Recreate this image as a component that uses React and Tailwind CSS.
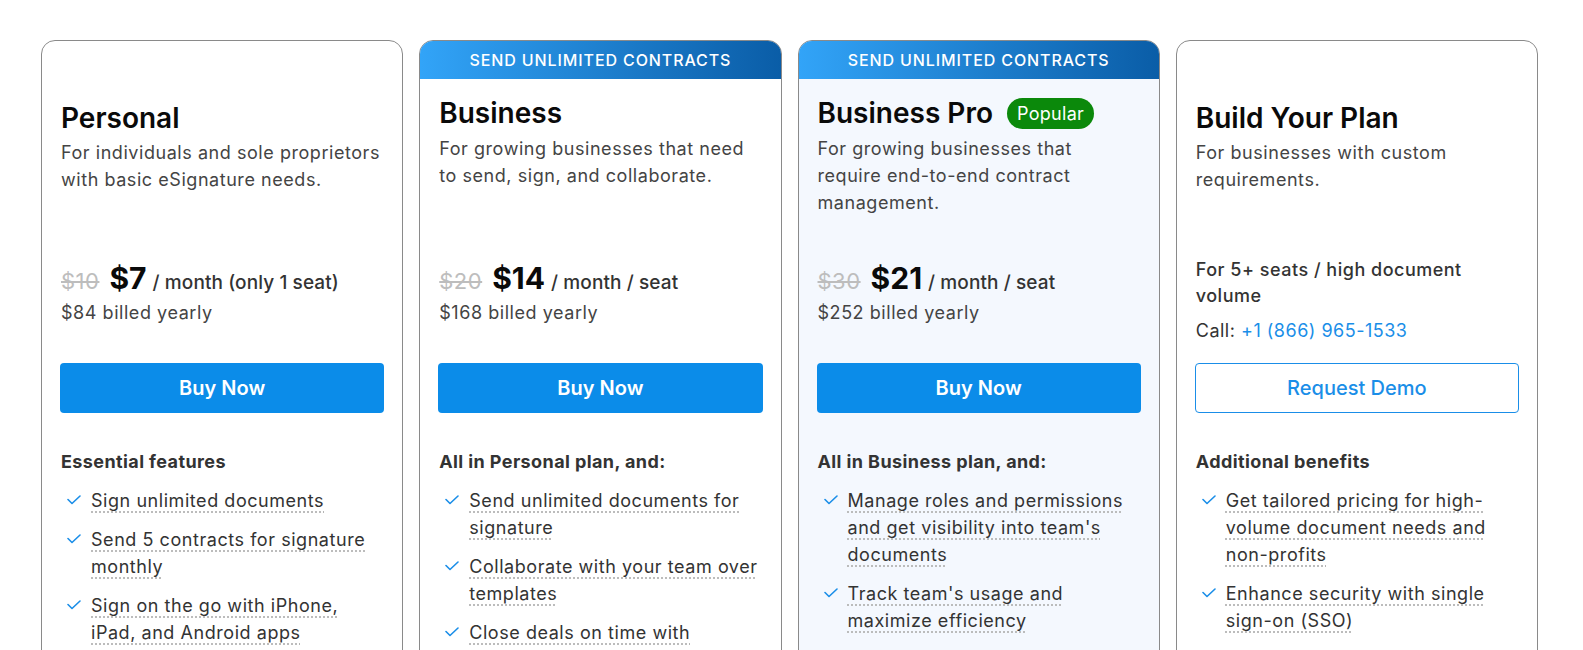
import React from 'react'

const plans = [
  {
    name: 'Personal',
    desc: 'For individuals and sole proprietors with basic eSignature needs.',
    old: '$10',
    price: '$7',
    unit: '/ month (only 1 seat)',
    billed: '$84 billed yearly',
    cta: 'Buy Now',
    heading: 'Essential features',
    features: [
      'Sign unlimited documents',
      'Send 5 contracts for signature monthly',
      'Sign on the go with iPhone, iPad, and Android apps',
      'Use reusable templates',
      'Access audit trail for every document',
    ],
  },
  {
    name: 'Business',
    banner: true,
    desc: 'For growing businesses that need to send, sign, and collaborate.',
    old: '$20',
    price: '$14',
    unit: '/ month / seat',
    billed: '$168 billed yearly',
    cta: 'Buy Now',
    heading: 'All in Personal plan, and:',
    features: [
      'Send unlimited documents for signature',
      'Collaborate with your team over templates',
      'Close deals on time with automated reminders',
      'Collect payments with documents',
    ],
  },
  {
    name: 'Business Pro',
    banner: true,
    popular: true,
    highlight: true,
    desc: 'For growing businesses that require end-to-end contract management.',
    old: '$30',
    price: '$21',
    unit: '/ month / seat',
    billed: '$252 billed yearly',
    cta: 'Buy Now',
    heading: 'All in Business plan, and:',
    features: [
      "Manage roles and permissions and get visibility into team's documents",
      "Track team's usage and maximize efficiency",
    ],
  },
  {
    name: 'Build Your Plan',
    desc: 'For businesses with custom requirements.',
    custom: true,
    cta: 'Request Demo',
    heading: 'Additional benefits',
    features: [
      'Get tailored pricing for high-volume document needs and non-profits',
      'Enhance security with single sign-on (SSO)',
    ],
  },
]

function CheckMark(){
  return (
    <svg width="14" height="10" viewBox="0 0 14 10" fill="none" className="mt-[8px] ml-[6px] shrink-0">
      <path d="M1 4.5L5 8.5L13 1" stroke="#1a8ee8" strokeWidth="1.6" strokeLinecap="round" strokeLinejoin="round" />
    </svg>
  )
}

function PlanCard({ plan }){
  return (
    <div className={`border border-[#8a8a8a] rounded-[14px] overflow-hidden flex flex-col ${plan.highlight ? 'bg-[#f4f8fe]' : 'bg-white'}`}>
      {/* header */}
      <div className="h-[219px] flex flex-col">
        {plan.banner ? (
          <div className="h-[38px] shrink-0 flex items-center justify-center bg-gradient-to-r from-[#32a4f8] to-[#0a5da7] text-white text-[16px] font-medium tracking-[0.9px] uppercase">
            Send unlimited contracts
          </div>
        ) : null}
        <div className={`px-[19px] ${plan.banner ? 'pt-[17px]' : 'pt-[60px]'}`}>
          <div className="flex items-center">
            <h3 className="text-[28px] leading-[34px] font-semibold text-[#0a0a0a]">{plan.name}</h3>
            {plan.popular && (
              <span className="ml-[14px] h-[31px] px-[10px] rounded-full bg-[#0b890b] text-white text-[18px] tracking-[0.3px] leading-[31px]">Popular</span>
            )}
          </div>
          <p className={`text-[18px] leading-[27px] tracking-[0.55px] text-[#444] ${plan.banner ? 'mt-[5px]' : 'mt-[4px]'}`}>{plan.desc}</p>
        </div>
      </div>

      {/* pricing */}
      <div className="h-[103px] px-[19px]">
        {plan.custom ? (
          <div className="-mt-[3px] text-[18px] tracking-[0.5px] text-[#333]">
            <div className="leading-[26px] font-medium">For 5+ seats / high document volume</div>
            <div className="mt-[8px] leading-[27px]">Call: <span className="text-[#1a8ee8]">+1 (866) 965-1533</span></div>
          </div>
        ) : (
          <div>
            <div className="flex items-baseline leading-[36px]">
              <span className="text-[22px] tracking-[0.5px] text-[#bdbdbd] line-through decoration-[1.5px] mr-[10px]">{plan.old}</span>
              <span className="text-[30px] font-bold text-[#0a0a0a] mr-[6px]">{plan.price}</span>
              <span className="text-[19px] font-medium tracking-[0.1px] text-[#333]">{plan.unit}</span>
            </div>
            <div className="-mt-[2px] text-[18px] leading-[27px] tracking-[0.55px] text-[#444]">{plan.billed}</div>
          </div>
        )}
      </div>

      {/* cta */}
      <div className="px-[18px]">
        {plan.custom ? (
          <button className="w-full h-[50px] rounded-[4px] border border-[#1a8ee8] bg-white text-[#1a8ee8] text-[20px] font-medium">{plan.cta}</button>
        ) : (
          <button className="w-full h-[50px] rounded-[4px] bg-[#0b8ce9] text-white text-[20px] font-semibold">{plan.cta}</button>
        )}
      </div>

      {/* features */}
      <div className="px-[19px] pt-[35px] pb-[30px]">
        <div className="text-[18px] leading-[27px] font-bold tracking-[0.4px] text-[#333]">{plan.heading}</div>
        <ul className="mt-[12px] flex flex-col gap-[12px]">
          {plan.features.map(f => (
            <li key={f} className="flex gap-[10px]">
              <CheckMark />
              <span className="text-[18px] leading-[27px] tracking-[0.55px] text-[#333] underline decoration-dotted decoration-[#b5b5b5] underline-offset-[5px]">{f}</span>
            </li>
          ))}
        </ul>
      </div>
    </div>
  )
}

export default function App(){
  return (
    <div className="min-h-screen bg-white font-[Inter,sans-serif] pt-[40px] pl-[41px]">
      <div className="w-[1497px] grid grid-cols-4 gap-[16px] items-stretch">
        {plans.map(p => <PlanCard key={p.name} plan={p} />)}
      </div>
    </div>
  )
}
